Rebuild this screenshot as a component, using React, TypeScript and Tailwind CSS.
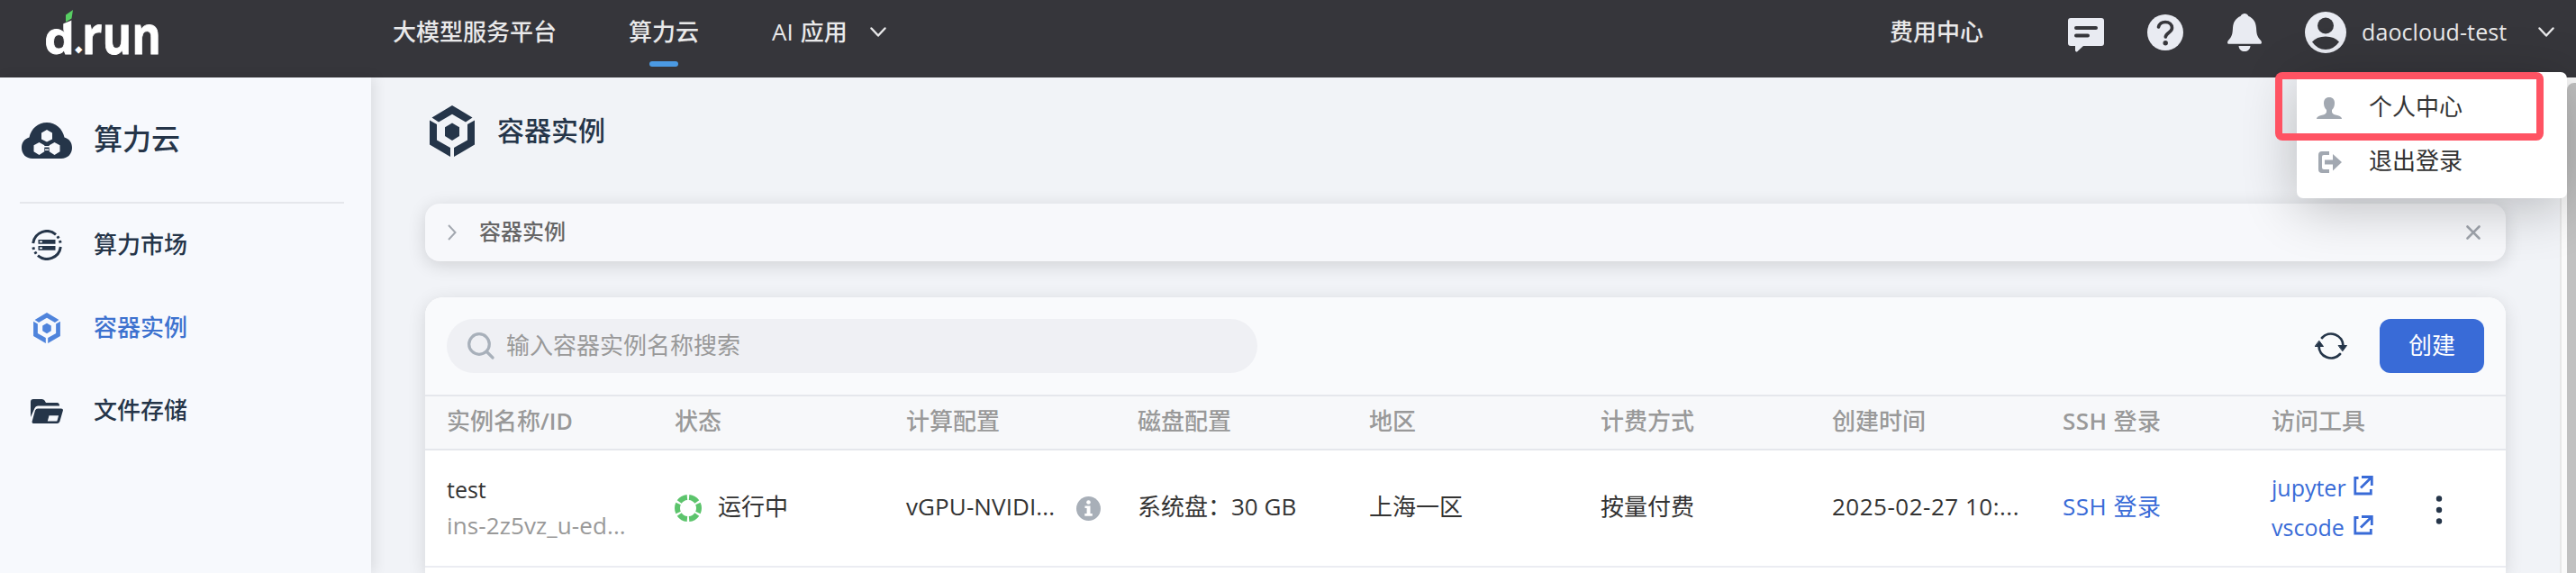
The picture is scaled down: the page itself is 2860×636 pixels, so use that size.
import React from "react";

const FONT = "font-['Open_Sans','Noto_Sans_CJK_SC',sans-serif]";

function Chevron({ className = "" }: { className?: string }) {
  return (
    <svg viewBox="0 0 18 12" className={`h-3 w-[18px] ${className}`} fill="none" stroke="currentColor" strokeWidth="2.4" strokeLinecap="round" strokeLinejoin="round">
      <path d="M1.5 1.5 9 9.5l7.500-8" />
    </svg>
  );
}

function HexIcon({ className = "" }: { className?: string }) {
  return (
    <svg viewBox="0 0 50 57" className={className} fill="currentColor">
      <path d="M25 0 47.500 13.500 40 18.500 25 9.700 10 18.500 2.500 13.500Z" />
      <path d="M0 16.500 8 21V38.500L23 47V57L0 43.500Z" />
      <path d="M50 16.500 42 21V38.500L27 47V57L50 43.500Z" />
      <path d="M25 19.500 33 24.200V34L25 39 17 34V24.200Z" />
    </svg>
  );
}

function CloudIcon() {
  return (
    <svg viewBox="0 0 56 40" className="h-10 w-14" fill="#253549">
      <path d="M28 0C18 0 10.500 7 8.500 16.500 3 18 0 22.500 0 28c0 7 5 12 12 12h32c7 0 12-5 12-12 0-5.500-3-10-8.500-11.500C45.500 7 38 0 28 0Z" />
      <g fill="#f7f9fd">
        <path d="m28 8 6 3.400v7L28 21.500l-6-3.100v-7Z" />
        <path d="m19.500 22 5.800 3.200v7L19.500 36l-6-3.800v-7Z" />
        <path d="m36.500 22 6 3.200v7L36.500 36l-5.800-3.800v-7Z" />
        <path d="M25 26h6v1.600h-6zM26 29.500h4v1.500h-4z" />
      </g>
    </svg>
  );
}

function MarketIcon() {
  return (
    <svg viewBox="0 0 34 34" className="h-[34px] w-[34px]" fill="none">
      <g stroke="#253549" strokeWidth="3">
        <path d="M1.700 15A15.400 15.400 0 0 1 27 5.300" />
        <path d="M32.300 19A15.400 15.400 0 0 1 7 28.700" />
        <path d="M28.800 7.200l1.800 2.900M31.500 12l.8 3.400M5.200 26.800l-1.800-2.900M2.500 22l-.8-3.400" strokeDasharray="2.700 1" />
      </g>
      <path fill="#253549" d="M7.500 11h19v4.800h-19zM7.500 18h19v4.800h-19z" />
      <path fill="#f7f9fd" d="M9 12.600h3v1.600H9zM9 19.600h3v1.600H9z" />
    </svg>
  );
}

function FolderIcon() {
  return (
    <svg viewBox="0 0 36 27" className="h-[27px] w-9" fill="#253549">
      <path d="M0 20V3Q0 0 3 0h9.500q2 0 3 1.500L17 4h12.500Q32 4 32 7.500H8q-2.500 0-3.500 2.500Z" />
      <path fillRule="evenodd" d="M8 10.500h26q2.500 0 1.800 2.500l-3.500 12q-.8 2-3 2H3.500Q1 27 1.700 24.500L5 12.500q.8-2 3-2ZM20.500 18.200l-1.700 6.200h10.500l1.800-6.200Z" />
    </svg>
  );
}

function Logo() {
  return (
    <svg viewBox="50 0 134 86" className="h-[86px] w-[134px] overflow-visible" fontWeight="700" fill="#fff">
      <text x="49" y="59.500" fontFamily="Open Sans, sans-serif" fontSize="51" stroke="#fff" strokeWidth="0.8" textLength="34" lengthAdjust="spacingAndGlyphs">d</text>
      <g transform="translate(87.300 55.500) rotate(45)">
        <text x="-5.600" y="2.800" fontFamily="Liberation Sans, sans-serif" fontSize="40">.</text>
      </g>
      <text x="91" y="59.500" fontFamily="Open Sans, sans-serif" fontSize="59" stroke="#fff" strokeWidth="0.8" textLength="88" lengthAdjust="spacingAndGlyphs">run</text>
      <path fill="#36363b" d="M66 14h20v6L66 28Z" />
      <path fill="#58cf63" d="M81 11 73 16.500V24.500L79.500 20.500Z" />
    </svg>
  );
}

const sideItems = [
  { label: "算力市场", icon: <MarketIcon />, color: "text-[#253549]" },
  { label: "容器实例", icon: <HexIcon className="h-[34px] w-[30px] text-[#4f84dc]" />, color: "text-[#3d72cf]" },
  { label: "文件存储", icon: <FolderIcon />, color: "text-[#253549]" },
];

function Header() {
  return (
    <header className="flex h-[86px] shrink-0 bg-[#36363b] pl-[50px] text-[26px] font-medium leading-[70px] text-[#e9e9ea]">
      <div className="w-[386px]"><Logo /></div>
      <nav className="flex">
        <span className="w-[262px]">大模型服务平台</span>
        <span className="flex w-[159px] flex-col">
          算力云
          <i className="-mt-0.5 ml-[23px] h-1.5 w-8 rounded-[3px] bg-[#4b9ae3]" />
        </span>
        <span className="flex w-[109px]"><span className="mr-2 font-normal">AI</span>应用</span>
        <Chevron className="mt-[30px]" />
      </nav>
      <div className="ml-auto flex">
        <span className="w-[198px]">费用中心</span>
        <svg viewBox="0 0 40 38" className="mt-5 mr-12 h-[38px] w-10" fill="#e9ebf2">
          <path fillRule="evenodd" d="M3 0h34q3 0 3 3v25q0 3-3 3H17l-7 6.500q-2 .5-2-2V31H3q-3 0-3-3V3q0-3 3-3Zm6 9a2 2 0 0 0 0 4h22a2 2 0 0 0 0-4Zm0 8.500a2 2 0 0 0 0 4h13a2 2 0 0 0 0-4Z" />
        </svg>
        <svg viewBox="0 0 40 40" className="mt-4 mr-[49px] h-10 w-10">
          <circle cx="20" cy="20" r="20" fill="#e9ebf2" />
          <path d="M12.500 14c1-4 4-5.500 7.500-5.500 4.500 0 7.500 2.800 7.500 6.500 0 5-6.800 5.200-7.200 10" fill="none" stroke="#36363b" strokeWidth="3.600" strokeLinecap="round" />
          <circle cx="20.200" cy="31.800" r="2.700" fill="#36363b" />
        </svg>
        <svg viewBox="0 0 38 42" className="mt-[15px] mr-12 h-[42px] w-[38px]" fill="#e9ebf2">
          <path d="M19 0q3 0 4.500 3C28.500 5 31.500 9 32 16c.5 7 .5 9 5.500 14.500.8 1.800.5 3.300-1 3.300h-35c-1.500 0-1.800-1.500-1-3.300C5.500 25 5.500 23 6 16 6.500 9 9.500 5 14.500 3 16 0 19 0 19 0ZM12.500 36h13c-.5 4-3 6-6.500 6s-6-2-6.500-6Z" />
        </svg>
        <svg viewBox="0 0 46 46" className="mt-[13px] mr-[17px] h-[46px] w-[46px]">
          <circle cx="23" cy="23" r="23" fill="#e9ebf2" />
          <circle cx="23" cy="15.500" r="9" fill="#36363b" />
          <path d="M8 33.500Q13 27.500 23 27.500T38 33.500Q32 42 23 42T8 33.500Z" fill="#36363b" />
        </svg>
        <span className="w-[196px] text-[25px] font-normal tracking-[0.1px]">daocloud-test</span>
        <Chevron className="mt-[30px] mr-6" />
      </div>
    </header>
  );
}

const cols = "grid grid-cols-[253px_257px_257px_257px_257px_257px_256px_232px_182px_1fr] pl-6";

function OpenIcon() {
  return (
    <svg viewBox="0 0 22 22" className="-mt-1 h-[22px] w-[22px]" fill="none" stroke="#396bd7" strokeWidth="2.800">
      <path d="M5.500 2.500H1.800v17.500h17.500v-5M9 1.500h11.300V11M20 1.800 8 13.500" />
    </svg>
  );
}

function UserMenu() {
  return (
    <div className="absolute top-20 left-[2550px] flex h-[140px] w-[300px] flex-col rounded-[7px] bg-white pt-[9px] text-[#333] shadow-[0_10px_60px_rgba(0,0,0,0.24)]">
      <div className="flex h-[60px] items-center pl-[22px]">
        <svg viewBox="0 0 28 24" className="mt-0.5 mr-[30px] h-6 w-7" fill="#a2a8b1">
          <path d="M14 0c4 0 6 2.500 6 6.500 0 3-1 5.500-3 7.500v2.500c1 2.500 3 2.700 6 3.500 3.500 1 5 2 5 4H0c0-2 1.500-3 5-4 3-.8 5-1 6-3.500V14C9 12 8 9.500 8 6.500 8 2.500 10 0 14 0Z" />
        </svg>
        <span className="-mt-0.5">个人中心</span>
      </div>
      <div className="flex h-[60px] items-center pl-6">
        <svg viewBox="0 0 26 24" className="mt-0.5 mr-[30px] h-6 w-[26px]" fill="#a2a8b1">
          <path d="M4 0h8v4H6Q4 4 4 6v12q0 2 2 2h6v4H4Q0 24 0 20V4Q0 0 4 0ZM7 9.500h9V3l10 9-10 9.500V14.500H7Z" />
        </svg>
        <span className="-mt-0.5">退出登录</span>
      </div>
      <div className="absolute top-0 -left-6 h-[76px] w-[298px] rounded-lg bg-[#ff5363] [clip-path:path(evenodd,'M0_0H298V76H0ZM8_8V68H290V8Z')]" />
    </div>
  );
}

export default function App() {
  return (
    <div className={`relative flex h-[636px] w-[2860px] flex-col overflow-hidden bg-[#f1f3f7] text-[26px] text-[#333] ${FONT}`}>
      <Header />
      <div className="flex min-h-0 flex-1">
        <aside className="flex w-[412px] shrink-0 flex-col bg-[#f7f9fd] shadow-[4px_0_14px_rgba(0,0,0,0.09)]">
          <div className="mr-[30px] ml-[22px] flex h-[140px] items-center gap-6 border-b-2 border-[#e5e7ec] pl-0.5 text-[32px] font-medium text-[#253549]">
            <span className="flex pt-[1px]"><CloudIcon /></span>
            <span className="-mt-0.5">算力云</span>
          </div>
          {sideItems.map((s) => (
            <div key={s.label} className={`flex h-[92px] items-center font-medium ${s.color}`}>
              <span className="flex w-[104px] justify-center">{s.icon}</span>
              <span className="-mt-0.5">{s.label}</span>
            </div>
          ))}
        </aside>
        <main className="flex flex-1 flex-col pl-[60px]">
          <div className="flex h-[140px] items-start gap-[25px] pl-[5px] pt-[31px] text-[30px] font-medium leading-[57px] text-[#253549]">
            <HexIcon className="h-[57px] w-[50px]" />
            <span className="-mt-px">容器实例</span>
          </div>
          <div className="flex h-16 w-[2310px] shrink-0 items-center rounded-2xl bg-[#f7f8fb] pl-[25px] pr-7 text-[24px] font-medium text-[#666] shadow-[0_4px_20px_rgba(0,0,0,0.14)]">
            <svg viewBox="0 0 10 18" className="mr-[25px] h-[18px] w-2.5" fill="none" stroke="#a3a8b0" strokeWidth="2"><path d="m1 1 7.500 8L1 17" /></svg>
            <span className="-mt-[3px]">容器实例</span>
            <svg viewBox="0 0 16 16" className="ml-auto h-4 w-4" fill="none" stroke="#a0a5ad" strokeWidth="2.600" strokeLinecap="round"><path d="m1.500 1.500 13 13m0-13-13 13" /></svg>
          </div>
          <section className="mt-10 flex w-[2310px] flex-1 flex-col rounded-t-[20px] bg-white shadow-[0_4px_20px_rgba(0,0,0,0.12)]">
            <div className="flex h-[110px] shrink-0 items-center rounded-t-[20px] border-b-2 border-[#e5e7ec] bg-[#f9fafc] px-6">
              <div className="flex h-[60px] w-[900px] items-center gap-[13px] rounded-full bg-[#eff0f4] pl-[23px] text-[#999]">
                <svg viewBox="0 0 30 30" className="h-[30px] w-[30px]" fill="none" stroke="#a8b0ba" strokeWidth="3.200" strokeLinecap="round"><circle cx="13" cy="13" r="11.300" /><path d="m21.500 21.500 6.500 6.500" /></svg>
                <span className="-mt-0.5">输入容器实例名称搜索</span>
              </div>
              <svg viewBox="0 0 36 30" className="mr-9 ml-auto h-[30px] w-9" fill="none" stroke="#253549" strokeWidth="2.800" strokeLinecap="round">
                <path d="M8 6A13.500 13.500 0 0 1 31.500 15M28 24A13.500 13.500 0 0 1 4.500 15" />
                <path d="M26.500 14.500h9L31 20.500ZM.5 15.500h9L5 9.500Z" fill="#253549" strokeWidth="1" strokeLinejoin="round" />
              </svg>
              <button className="h-[60px] w-[116px] rounded-xl bg-[#396bd7] pb-0.5 text-white">创建</button>
            </div>
            <div className={`h-[60px] shrink-0 items-center border-b-2 border-[#e5e7ec] bg-[#f7f8fa] pb-[3px] font-medium text-[#999] ${cols}`}>
              <span>实例名称<span className="text-[25px] font-semibold">/ID</span></span><span>状态</span><span>计算配置</span><span>磁盘配置</span><span>地区</span><span>计费方式</span><span>创建时间</span><span className="tracking-[0.4px]"><span className="font-semibold">SSH</span> 登录</span><span>访问工具</span>
            </div>
            <div className={`h-[130px] shrink-0 items-center border-b-2 border-[#ebecf2] pb-[3px] ${cols}`}>
              <div className="leading-10"><div className="text-[25px]">test</div><div className="tracking-[0.1px] text-[#999]">ins-2z5vz_u-ed...</div></div>
              <div className="flex items-center gap-[18px]">
                <svg viewBox="0 0 30 30" className="mt-[3px] h-[30px] w-[30px]" fill="none" stroke="#5cc46c" strokeWidth="6">
                  <circle cx="15" cy="15" r="12" pathLength="60" strokeDasharray="8.200 1.800" strokeDashoffset="-5.900" />
                </svg>
                <span>运行中</span>
              </div>
              <div className="flex items-center">
                <span className="w-[189px] tracking-[0.1px]">vGPU-NVIDI...</span>
                <svg viewBox="0 0 27 27" className="mt-[3px] h-[27px] w-[27px]"><circle cx="13.500" cy="13.500" r="13.500" fill="#a8afb8" /><circle cx="13.500" cy="6.500" r="2.300" fill="#fff" /><path fill="#fff" d="M9.500 10.500h6v8.500h2.300v2.700H9.300V19h2.300v-6H9.500Z" /></svg>
              </div>
              <span>系统盘：30 GB</span><span>上海一区</span><span>按量付费</span><span className="tracking-[0.5px]">2025-02-27 10:...</span><span className="tracking-[0.5px] text-[#396bd7]">SSH 登录</span>
              <div className="text-[25px] leading-[44px] text-[#396bd7]">
                <div className="flex items-center"><span className="w-[91px]">jupyter</span><OpenIcon /></div>
                <div className="flex items-center"><span className="w-[91px]">vscode</span><OpenIcon /></div>
              </div>
              <svg viewBox="0 0 8 32" className="mt-[7px] h-8 w-2" fill="#253549"><circle cx="4" cy="3.500" r="3.200" /><circle cx="4" cy="16" r="3.200" /><circle cx="4" cy="28.500" r="3.200" /></svg>
            </div>
          </section>
        </main>
        <div className="w-[18px] shrink-0 border-l-2 border-[#e8e8e8] bg-[#fafafa] pt-1.5 pl-1.5">
          <div className="h-full w-5 rounded-tl-lg bg-[#c1c1c1]" />
        </div>
      </div>
      <UserMenu />
    </div>
  );
}
